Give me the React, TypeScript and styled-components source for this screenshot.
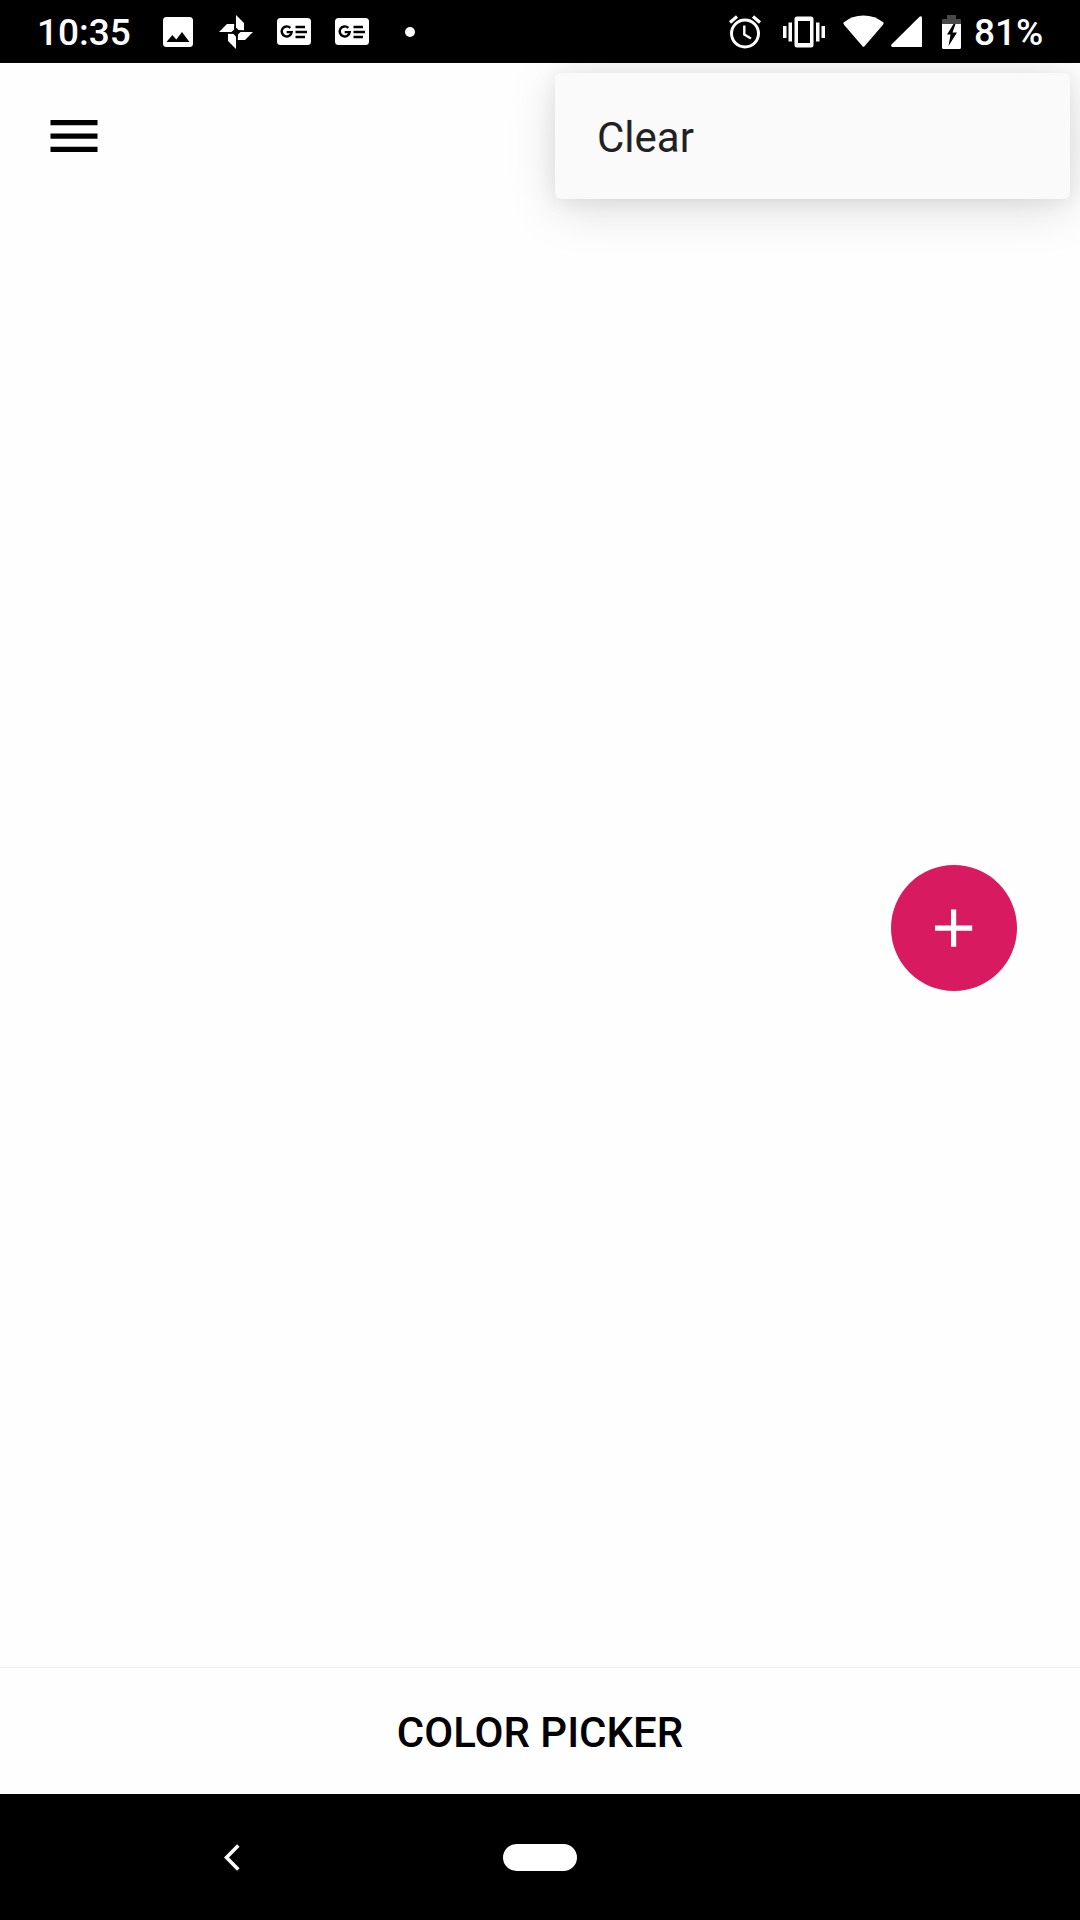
import React from "react";
import styled, { createGlobalStyle } from "styled-components";

const GlobalStyle = createGlobalStyle`
  *, *::before, *::after { box-sizing: border-box; }
  body {
    margin: 0;
    background: #fefefe;
    font-family: Roboto, "Liberation Sans", sans-serif;
  }
  button {
    margin: 0;
    padding: 0;
    border: 0;
    background: none;
    color: inherit;
    font: inherit;
    cursor: pointer;
  }
  svg { display: block; flex: none; }
`;

const Screen = styled.div`
  display: flex;
  flex-direction: column;
  min-height: 100vh;
`;

const StatusBar = styled.header`
  display: flex;
  justify-content: space-between;
  height: 63px;
  padding: 0 36px 0 37px;
  background: #000;
  color: #fff;
  font-size: 37px;
  line-height: 44px;
  font-weight: 500;
`;

const StatusGroup = styled.div`
  display: flex;
  align-items: center;
`;

const Clock = styled.time`
  width: 112px;
  padding-top: 3px;
`;

const Slot = styled.span<{ $width: number }>`
  display: flex;
  justify-content: center;
  width: ${(p) => p.$width}px;
`;

const Battery = styled.span`
  width: 70px;
  padding-top: 3px;
  white-space: nowrap;
`;

const Content = styled.main`
  position: relative;
  display: flex;
  flex: 1;
  flex-direction: column;
  overflow: hidden;
`;

const Toolbar = styled.div`
  display: flex;
  align-items: center;
  height: 146px;
  padding: 0 38px;
`;

const IconButton = styled.button`
  display: grid;
  place-items: center;
  width: 72px;
  height: 72px;
`;

const Canvas = styled.div`
  flex: 1;
`;

const PickerButton = styled.button`
  height: 127px;
  padding-top: 4px;
  border-top: 1px solid #f2f2f2;
  color: #000;
  font-size: 42px;
  line-height: 48px;
  font-weight: 500;
  text-transform: uppercase;
`;

const Menu = styled.div`
  position: absolute;
  top: 10px;
  right: 10px;
  width: 515px;
  border-radius: 6px;
  background: #fafafa;
  box-shadow: 0 10px 50px rgba(0, 0, 0, 0.13), 0 2px 20px rgba(0, 0, 0, 0.07);
`;

const MenuItem = styled.button`
  display: block;
  width: 100%;
  height: 126px;
  padding: 4px 42px 0;
  color: #212121;
  font-size: 42px;
  line-height: 48px;
  text-align: left;
`;

const Fab = styled.button`
  position: absolute;
  top: calc(50% - 64px);
  right: 63px;
  display: grid;
  place-items: center;
  width: 126px;
  height: 126px;
  border-radius: 50%;
  background: #d81b60;
`;

const NavBar = styled.nav`
  display: grid;
  grid-template-columns: 1fr 152px 1fr;
  align-items: center;
  height: 126px;
  background: #000;
`;

const BackButton = styled(IconButton)`
  justify-self: center;
`;

const HomeButton = styled(IconButton)`
  width: 100%;
`;

const HomePill = styled.span`
  width: 74px;
  height: 27px;
  border-radius: 14px;
  background: #fff;
`;

const ImageIcon = () => (
  <svg width="30" height="30" viewBox="0 0 30 30" fill="#fff" aria-hidden="true">
    <path
      fillRule="evenodd"
      d="M3.5 0h23A3.5 3.5 0 0 1 30 3.5v23a3.5 3.5 0 0 1-3.5 3.5h-23A3.5 3.5 0 0 1 0 26.500v-23A3.500 3.500 0 0 1 3.500 0zM3.500 25h23l-7.500-10-5.700 7.500-4-4.500z"
    />
  </svg>
);

const PinwheelIcon = () => (
  <svg width="34" height="34" viewBox="0 0 34 34" fill="#fff" aria-hidden="true">
    <path d="M17 0l8 8v7.200l-5.500-.2-2.500-2.500z" />
    <path d="M34 17l-8 8h-7.200l.2-5.500 2.500-2.500z" />
    <path d="M17 34l-8-8v-7.200l5.500.2 2.500 2.500z" />
    <path d="M0 17l8-8h7.200l-.2 5.500-2.500 2.500z" />
  </svg>
);

const NewsIcon = () => (
  <svg width="34" height="27" viewBox="0 0 34 27" aria-hidden="true">
    <rect width="34" height="27" rx="3.500" fill="#fff" />
    <path d="M13.300 9.900a5 5 0 1 0 1.400 4.200h-5" fill="none" stroke="#000" strokeWidth="2.400" />
    <path d="M18.500 9h9.500M18.500 14h11.500M18.500 19h9.500" stroke="#000" strokeWidth="2.400" />
  </svg>
);

const DotIcon = () => (
  <svg width="10" height="10" viewBox="0 0 10 10" aria-hidden="true">
    <circle cx="5" cy="5" r="5" fill="#fff" />
  </svg>
);

const AlarmIcon = () => (
  <svg width="32" height="34" viewBox="0 0 32 34" fill="none" stroke="#fff" aria-hidden="true">
    <circle cx="16" cy="18.500" r="13.500" strokeWidth="3" />
    <path d="M15.300 10.500v9l6.700 4" strokeWidth="2.400" />
    <path d="M1 7.500L8 1.500M31 7.500L24 1.500" strokeWidth="3.200" />
  </svg>
);

const VibrateIcon = () => (
  <svg width="42" height="32" viewBox="0 0 42 32" fill="#fff" aria-hidden="true">
    <path
      fillRule="evenodd"
      d="M14 .5h14a2.500 2.500 0 0 1 2.500 2.500v26a2.500 2.500 0 0 1-2.500 2.500h-14a2.500 2.500 0 0 1-2.500-2.500v-26a2.500 2.500 0 0 1 2.500-2.500zM15 5v22h12v-22z"
    />
    <path d="M0 10h3.500v12H0zM5.500 6.500H9v19H5.500zM33 6.500h3.500v19H33zM38.500 10H42v12h-3.500z" />
  </svg>
);

const WifiIcon = () => (
  <svg width="41" height="34" viewBox="0 0 41 34" fill="#fff" aria-hidden="true">
    <path d="M.5 7.500Q9 .5 20.500.5T40.500 7.500Q40.800 8.800 40 9.800L21.500 31.200q-1 1-2 0L1 9.800Q.2 8.800.5 7.500z" />
  </svg>
);

const SignalIcon = () => (
  <svg width="31" height="31" viewBox="0 0 31 31" fill="#fff" aria-hidden="true">
    <path d="M31 1.500V31H1.500Q-.5 30.500.5 28.500L28.500.7Q30.500-.5 31 1.500z" />
  </svg>
);

const BatteryIcon = () => (
  <svg width="19" height="34" viewBox="0 0 19 34" aria-hidden="true">
    <path d="M5 0h9v4h4q1 0 1 1v4H0V5q0-1 1-1h4z" fill="#484848" />
    <path
      fillRule="evenodd"
      fill="#fff"
      d="M0 9h19v23.500q0 1.500-1.500 1.500h-16Q0 34 0 32.500zM11.500 9L5 19.500H8.500L6.500 31 15 17.500H10.500L13.500 9z"
    />
  </svg>
);

const MenuIcon = () => (
  <svg width="48" height="32" viewBox="0 0 48 32" aria-hidden="true">
    <path d="M.5 0h47v5.300H.5zM.5 13.500h47v5.300H.5zM.5 26.700h47V32H.5z" fill="#000" />
  </svg>
);

const PlusIcon = () => (
  <svg width="38" height="38" viewBox="0 0 38 38" aria-hidden="true">
    <path d="M16 .5h5.200v16h16v5.200h-16v16h-5.200v-16h-16v-5.200h16z" fill="#fff" />
  </svg>
);

const BackIcon = () => (
  <svg width="16" height="27" viewBox="0 0 16 27" aria-hidden="true">
    <path d="M14.300 1.500L2.500 13.500l11.800 12" fill="none" stroke="#fff" strokeWidth="3.600" />
  </svg>
);

const notifications = [ImageIcon, PinwheelIcon, NewsIcon, NewsIcon, DotIcon];

const systemIcons = [
  { Icon: AlarmIcon, width: 58 },
  { Icon: VibrateIcon, width: 60 },
  { Icon: WifiIcon, width: 58 },
  { Icon: SignalIcon, width: 28 },
  { Icon: BatteryIcon, width: 62 },
];

const SystemIcons = styled.div`
  display: flex;
  align-items: center;
  margin-right: -8px;
`;

export default function App() {
  return (
    <Screen>
      <GlobalStyle />
      <StatusBar>
        <StatusGroup>
          <Clock>10:35</Clock>
          {notifications.map((Icon, i) => (
            <Slot key={i} $width={58}>
              <Icon />
            </Slot>
          ))}
        </StatusGroup>
        <StatusGroup>
          <SystemIcons>
            {systemIcons.map(({ Icon, width }, i) => (
              <Slot key={i} $width={width}>
                <Icon />
              </Slot>
            ))}
          </SystemIcons>
          <Battery>81%</Battery>
        </StatusGroup>
      </StatusBar>
      <Content>
        <Toolbar>
          <IconButton type="button" aria-label="Open navigation">
            <MenuIcon />
          </IconButton>
        </Toolbar>
        <Canvas />
        <PickerButton type="button">Color picker</PickerButton>
        <Fab type="button" aria-label="Add">
          <PlusIcon />
        </Fab>
        <Menu role="menu">
          <MenuItem type="button" role="menuitem">
            Clear
          </MenuItem>
        </Menu>
      </Content>
      <NavBar>
        <BackButton type="button" aria-label="Back">
          <BackIcon />
        </BackButton>
        <HomeButton type="button" aria-label="Home">
          <HomePill />
        </HomeButton>
      </NavBar>
    </Screen>
  );
}
